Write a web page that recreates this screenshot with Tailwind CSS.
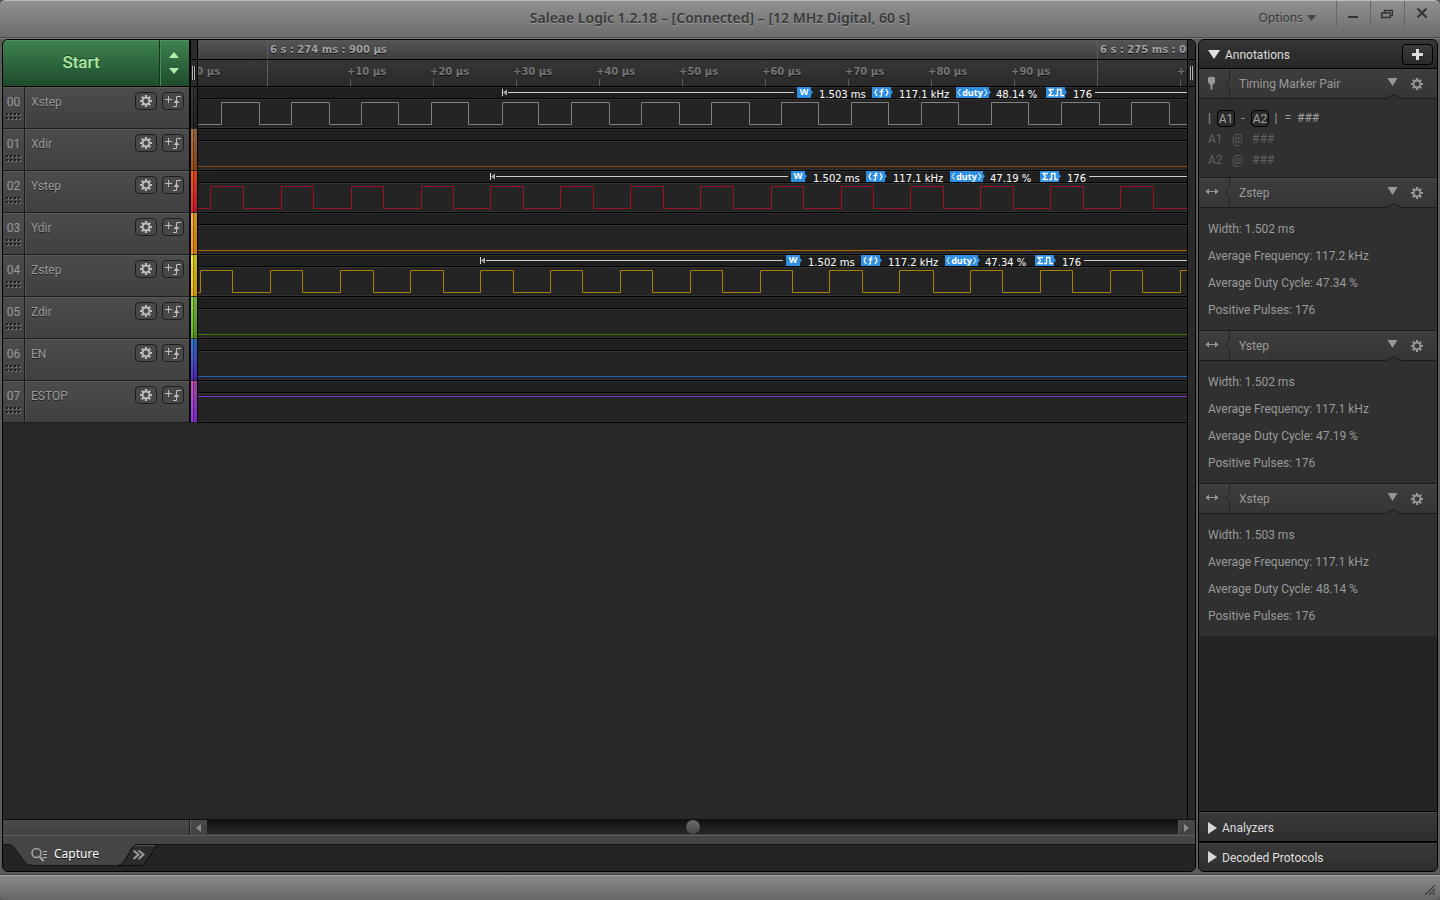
<!DOCTYPE html>
<html lang="en">
<head>
  <meta charset="UTF-8">
  <meta name="viewport" content="width=device-width, initial-scale=1.0">
  <title>Saleae Logic 1.2.18</title>
  <script src="https://cdn.jsdelivr.net/npm/@tailwindcss/browser@4"></script>
</head>
<body class="h-screen flex flex-col overflow-hidden bg-[#5c5c5c] font-['Roboto',sans-serif] text-xs text-[#9a9a9a] select-none">

  <!-- Title bar -->
  <header class="h-[39px] shrink-0 grid grid-cols-[1fr_auto_1fr] bg-linear-to-b from-[#919193] to-[#6a6a6a] border-t border-[#bcbcbc] rounded-t-md shadow-[inset_0_-1px_#7d7d7d,inset_0_-2px_#4c4c4c] font-['Noto_Sans',sans-serif]">
    <span></span>
    <h1 class="pt-[7px] text-sm leading-5 font-semibold text-[#3a3a3a] [text-shadow:0_1px_#999]">Saleae Logic 1.2.18 – [Connected] – [12 MHz Digital, 60 s]</h1>
    <div class="flex justify-end pr-0.5">
      <button class="h-[34px] mr-5 flex items-center gap-1 text-[#353535] [text-shadow:0_1px_#999]">Options
        <svg class="w-[9px] h-[6px]"><path d="M0 0h9L4.5 6z" fill="#444"/></svg>
      </button>
      <button aria-label="Minimize" class="w-[34px] h-[26px] border-l border-[#666] flex justify-center pr-0.5"><svg class="w-[12px] h-[26px]"><path d="M1 15h10v2H1z" fill="#333"/></svg></button>
      <button aria-label="Restore" class="w-[34px] h-[26px] border-l border-[#666] flex justify-center pr-0.5"><svg class="w-[12px] h-[26px]"><path d="M3.500 11.500v-2h8v5h-2M.75 12h8.500v4.500h-8.500z" fill="none" stroke="#333" stroke-width="1.5"/></svg></button>
      <button aria-label="Close" class="w-[34px] h-[26px] border-l border-[#666] flex justify-center"><svg class="w-[12px] h-[26px]"><path d="M1.500 7.500l9 9M10.500 7.500l-9 9" stroke="#333" stroke-width="2"/></svg></button>
    </div>
  </header>

  <main class="flex-1 min-h-0 flex gap-0.5 px-0.5">

    <!-- Capture view -->
    <section class="flex-1 min-w-0 flex flex-col border border-black rounded-md overflow-hidden bg-[#282828]">
      <div class="flex-1 min-h-0 flex">
        <div class="flex-1 min-w-0 flex flex-col">
          <!-- Start button and time ruler -->
          <div class="h-[47px] shrink-0 flex border-b border-black">
            <div class="w-[186px] flex bg-linear-to-b from-[#3f8350] to-[#1e4c2c] shadow-[inset_0_1px_#559364] text-[#aee6a4]">
              <button class="flex-1 text-[17px] leading-5 font-medium pb-0.5 [text-shadow:0_-1px_#1c4528]">Start</button>
              <div class="w-[30px] border-l border-[#133a1e] shadow-[inset_1px_0_#4b8c5b] flex flex-col items-center justify-center gap-[10px] pr-0.5">
                <button aria-label="Increase duration"><svg class="block w-[10px] h-[6px]"><path d="M0 6h10L5 0z" fill="#b6ecae"/></svg></button>
                <button aria-label="Decrease duration"><svg class="block w-[10px] h-[6px]"><path d="M0 0h10L5 6z" fill="#b6ecae"/></svg></button>
              </div>
            </div>
            <div class="w-[9px] border-l-2 border-r border-black bg-[#2b2b2b]">
              <div class="h-[20px] border-b border-black"></div>
              <svg class="block w-[6px] h-[26px]"><path d="M1.500 6v14M3.500 6v14" stroke="#b5b5b5"/><path d="M2.500 6v14M4.500 6v14" stroke="#111"/></svg>
            </div>
            <div class="flex-1 min-w-0 flex flex-col overflow-hidden font-['DejaVu_Sans',sans-serif] font-bold text-[10px] whitespace-nowrap [text-shadow:0_1px_#111]">
              <div class="h-[20px] flex pl-[69px] border-b border-black bg-linear-to-b from-[#565656] to-[#3e3e3e] text-[#a0a0a0] leading-5 overflow-hidden">
                <div class="w-[830px] shrink-0 border-l border-[#5e5e5e] pl-0.5">6 s : 274 ms : 900 µs</div>
                <div class="w-[830px] shrink-0 border-l border-[#5e5e5e] pl-0.5">6 s : 275 ms : 000 µs</div>
              </div>
              <div id="ruler" class="h-[26px] flex bg-linear-to-b from-[#373737] to-[#2a2a2a] text-[#757575] -ml-[17px]"></div>
            </div>
          </div>
          <!-- Channels -->
          <div id="channels"></div>
        </div>
        <!-- Right grip -->
        <div class="w-[8px] border-l border-black bg-[#2a2a2a]">
          <div class="h-[20px] border-b border-black"></div>
          <div class="h-[27px] border-b border-black"><svg class="block w-[7px] h-[26px]"><path d="M2.500 6v14M4.500 6v14" stroke="#b5b5b5"/><path d="M3.500 6v14" stroke="#111"/></svg></div>
        </div>
      </div>

      <!-- Horizontal scrollbar -->
      <div class="h-[16px] shrink-0 flex items-start bg-linear-to-b from-[#4a4a4a] to-[#414141] border-t border-[#111]">
        <div class="w-[187px] h-full border-r border-[#1c1c1c]"></div>
        <button aria-label="Scroll left" class="w-[17px] h-[15px] flex items-center justify-center pr-0.5 border-l border-[#606060]"><svg class="w-[5px] h-[8px]"><path d="M5 0v8L0 4z" fill="#8c8c8c"/></svg></button>
        <input type="range" aria-label="Time position" min="0" max="100" value="50" class="flex-1 min-w-0 h-[14px] appearance-none bg-linear-to-b from-[#121212] to-[#272727] [&::-webkit-slider-thumb]:appearance-none [&::-webkit-slider-thumb]:size-[14px] [&::-webkit-slider-thumb]:rounded-full [&::-webkit-slider-thumb]:bg-linear-to-b [&::-webkit-slider-thumb]:from-[#6c6c6c] [&::-webkit-slider-thumb]:to-[#454545]">
        <button aria-label="Scroll right" class="w-[17px] h-[15px] flex items-center justify-center pr-0.5 border-l border-[#555]"><svg class="w-[5px] h-[8px]"><path d="M0 0v8l5-4z" fill="#8c8c8c"/></svg></button>
      </div>

      <!-- Capture tabs -->
      <div class="h-[36px] shrink-0 bg-[#242424] shadow-[inset_0_1px_#606060,inset_0_9px_#464646,inset_0_10px_#161616]">
        <div class="relative flex h-full">
          <svg class="absolute left-0 top-0 w-[160px] h-[36px]">
            <path d="M0 1H160V9H134Q131 10 129 13L122 25Q119 30 115 30H29Q24 30 21 26L12 13Q9 9 4 9H0z" fill="#454545"/>
            <path d="M0 9.500H4Q9 9.500 12 13.500L21 26Q24 30.500 29 30.500H115" fill="none" stroke="#161616"/>
            <path d="M115 30.500Q119 30 122 25L129 13Q132 9.500 135 9.500H154L143 27Q141 30.500 137 30.500z" fill="#2c2c2c" stroke="#0c0c0c"/>
            <path d="M131.500 12Q133 10.500 135 10.500H152" fill="none" stroke="#555"/>
            <path d="M130.500 15.500l5 4-5 4.500M135.500 15.500l5 4-5 4.500" fill="none" stroke="#999" stroke-width="2"/>
          </svg>
          <a href="#capture" class="relative flex items-center gap-1.5 pl-7 h-[38px] text-white font-['Noto_Sans',sans-serif] text-xs [text-shadow:0_1px_#111]">
            <svg class="w-[17px] h-[15px]"><circle cx="5.500" cy="6" r="4.500" fill="none" stroke="#a5a5a5" stroke-width="1.500"/><path d="M9 10l3.500 4" stroke="#a5a5a5" stroke-width="2"/><path d="M12 4.500h4M12 7.500h4M12 10.500h4" stroke="#b5b5b5"/></svg>
            Capture
          </a>
        </div>
      </div>
    </section>

    <!-- Side panel -->
    <aside class="w-[240px] shrink-0 flex flex-col border border-black rounded-md overflow-hidden bg-[#242424]">
      <div class="h-[29px] shrink-0 flex items-center pl-[9px] pr-1 bg-linear-to-b from-[#353535] to-[#262626] border-b border-black text-[#dedede]">
        <svg class="w-[12px] h-[9px] mr-[5px]"><path d="M0 0h12L6 9z" fill="#e0e0e0"/></svg>
        <h2 class="flex-1 pt-0.5">Annotations</h2>
        <button aria-label="Add annotation" class="w-[31px] h-[21px] rounded-sm border border-black bg-linear-to-b from-[#3a3a3a] to-[#2a2a2a] flex items-center justify-center"><svg class="w-[11px] h-[11px]"><path d="M4 0h3v4h4v3H7v4H4V7H0V4h4z" fill="#ddd"/></svg></button>
      </div>
      <div id="annotations" class="bg-[#303030]"></div>
      <div class="flex-1"></div>
      <button class="h-[30px] shrink-0 flex items-center pl-[9px] gap-[5px] pt-0.5 border-t border-black bg-linear-to-b from-[#3a3a3a] to-[#2e2e2e] shadow-[inset_0_1px_#4a4a4a] text-[#dedede]">
        <svg class="w-[9px] h-[12px]"><path d="M0 0v12l9-6z" fill="#d8d8d8"/></svg>Analyzers
      </button>
      <button class="h-[30px] shrink-0 flex items-center pl-[9px] gap-[5px] border-t-2 border-black bg-linear-to-b from-[#3a3a3a] to-[#2e2e2e] shadow-[inset_0_1px_#4a4a4a] text-[#dedede]">
        <svg class="w-[9px] h-[12px]"><path d="M0 0v12l9-6z" fill="#d8d8d8"/></svg><span class="pt-px">Decoded Protocols</span>
      </button>
    </aside>
  </main>

  <!-- Status bar -->
  <footer class="h-[28px] shrink-0 pt-0.5">
    <div class="h-full flex justify-end items-end pr-1 pb-1 border-t border-[#414141] bg-linear-to-b from-[#8b8b8b] to-[#676767] shadow-[inset_0_1px_#a0a0a0] rounded-b-md">
      <svg class="w-[12px] h-[12px]"><path d="M1 11L11 1M5 11l6-6M9 11l2-2" stroke="#3c3c3c" stroke-width="1.200"/></svg>
    </div>
  </footer>

  <script>
    // Channel list; edges are x positions where the level toggles
    const channels = [
      { name: 'Xstep', strip: 'from-[#3a3a3a] to-[#292929]', stroke: '#808080', low: true,
        edges: [23, 61, 93, 131, 163, 200, 233, 270, 304, 340, 373, 411, 443, 481, 513, 551, 583, 620, 653, 690, 723, 760, 793, 830, 863, 901, 933, 971],
        measure: { start: 304, badge: 599, width: '1.503 ms', freq: '117.1 kHz', duty: '48.14 %', pulses: '176' } },
      { name: 'Xdir', strip: 'from-[#b07850] to-[#a8540f]', stroke: '#904c18', low: true, edges: [] },
      { name: 'Ystep', strip: 'from-[#ff5c1c] to-[#e6123c]', stroke: '#9c1226', low: true,
        edges: [12, 45, 83, 115, 153, 185, 223, 255, 292, 325, 362, 395, 432, 465, 502, 535, 573, 605, 643, 675, 712, 745, 782, 815, 852, 885, 922, 955],
        measure: { start: 292, badge: 593, width: '1.502 ms', freq: '117.1 kHz', duty: '47.19 %', pulses: '176' } },
      { name: 'Ydir', strip: 'from-[#ffb840] to-[#ff9600]', stroke: '#a86400', low: true, edges: [] },
      { name: 'Zstep', strip: 'from-[#f4f034] to-[#ffb600]', stroke: '#a88000', low: true,
        edges: [2, 34, 72, 104, 142, 175, 212, 245, 282, 315, 352, 384, 422, 454, 492, 524, 562, 594, 631, 664, 701, 735, 772, 804, 842, 874, 912, 944, 982],
        measure: { start: 282, badge: 588, width: '1.502 ms', freq: '117.2 kHz', duty: '47.34 %', pulses: '176' } },
      { name: 'Zdir', strip: 'from-[#94da50] to-[#62ae1c]', stroke: '#3f7a00', low: true, edges: [] },
      { name: 'EN', strip: 'from-[#2f80e0] to-[#5a28cc]', stroke: '#2c60b8', low: true, edges: [] },
      { name: 'ESTOP', strip: 'from-[#cc54c4] to-[#9530f0]', stroke: '#8630c8', low: false, edges: [] },
    ];

    const annotations = [
      { name: 'Zstep', rows: ['Width: 1.502 ms', 'Average Frequency: 117.2 kHz', 'Average Duty Cycle: 47.34 %', 'Positive Pulses: 176'] },
      { name: 'Ystep', rows: ['Width: 1.502 ms', 'Average Frequency: 117.1 kHz', 'Average Duty Cycle: 47.19 %', 'Positive Pulses: 176'] },
      { name: 'Xstep', rows: ['Width: 1.503 ms', 'Average Frequency: 117.1 kHz', 'Average Duty Cycle: 48.14 %', 'Positive Pulses: 176'] },
    ];

    // Gear with eight square teeth around a ring
    function gear(size, color, hole) {
      const teeth = [0, 45, 90, 135].map((a) => `<path d="M-1.200-6.500h2.400v13h-2.400z" transform="rotate(${a})"/>`).join('');
      return `<svg class="${size}" viewBox="-6.500 -6.500 13 13" fill="${color}">${teeth}<circle r="4.500"/><circle r="2.700" fill="${hole}"/></svg>`;
    }

    function signalPath(channel) {
      let level = channel.low ? 37.5 : 15.5;
      let d = `M0 ${level}`;
      channel.edges.forEach((x) => {
        level = level === 37.5 ? 15.5 : 37.5;
        d += `H${x + 0.5}V${level}`;
      });
      return d + 'H4000';
    }

    function badge(cls, content) {
      return `<span class="${cls} shrink-0 h-[11px] bg-[#2f8fe0] text-white font-bold text-[9px] leading-[10px] text-center [clip-path:polygon(0_0,calc(100%-2px)_0,calc(100%-2px)_3px,100%_5px,calc(100%-2px)_8px,calc(100%-2px)_100%,0_100%)]">${content}</span>`;
    }

    function measureBar(m) {
      return `
        <div class="relative flex h-[11px] font-['DejaVu_Sans',sans-serif] text-[10px] leading-4 text-white whitespace-nowrap">
          <div class="shrink-0" style="width:${m.start}px"></div>
          <div class="shrink-0 flex" style="width:${m.badge - m.start - 3}px">
            <svg class="w-[6px] h-[11px] shrink-0"><path d="M.5 2v7" stroke="#ddd"/><path d="M1 5.500l4-3v6z" fill="#aaa"/></svg>
            <div class="flex-1 h-px mt-[5px] bg-[#d0d0d0]"></div>
          </div>
          <div class="w-[3px] shrink-0"></div>
          ${badge("w-[16px] mr-[6px] pr-[2px] font-['Open_Sans',sans-serif]", 'W')}
          <span class="w-[53px] shrink-0">${m.width}</span>
          ${badge('w-[21px] mr-[6px]', '<svg class="w-[19px] h-[11px]" fill="none" stroke="#fff" stroke-width="1.300"><path d="M5 2L3 5.500l2 3.500M14 2l2 3.500L14 9M11.500 2.500Q9.500 1.500 9.500 4V8Q9.500 9.500 7.500 9M7.500 4.500h4"/></svg>')}
          <span class="w-[57px] shrink-0">${m.freq}</span>
          ${badge("w-[35px] mr-[5px] font-['Open_Sans',sans-serif]", '<span class="flex items-center justify-center gap-px pr-[2px]"><svg class="w-[4px] h-[11px]" fill="none" stroke="#fff"><path d="M3.500 2L1 5.500 3.500 9"/></svg>duty<svg class="w-[4px] h-[11px]" fill="none" stroke="#fff"><path d="M.5 2L3 5.500.5 9"/></svg></span>')}
          <span class="w-[50px] shrink-0">${m.duty}</span>
          ${badge('w-[21px] mr-[6px]', '<svg class="w-[19px] h-[11px]" fill="none" stroke="#fff" stroke-width="1.300"><path d="M8 2.500H3L5.500 5.500 3 8.500h5M9 8.500h2.500v-6h3.500v6h3"/></svg>')}
          <span class="w-[22px] shrink-0">${m.pulses}</span>
          <div class="flex-1 h-px mt-[5px] bg-[#d0d0d0]"></div>
        </div>`;
    }

    function channelRow(channel, index) {
      const dots = [0, 4, 8, 12].map((x) => [0, 4].map((y) =>
        `<path d="M${x} ${y}h2v2h-2z" fill="#1c1c1c"/><path d="M${x + 2} ${y + 1}h1v2h-2v-1h1z" fill="#777"/>`).join('')).join('');
      return `
        <div class="flex h-[42px]">
          <div class="w-[22px] flex flex-col items-center border-r border-b border-[#1c1c1c] bg-linear-to-b from-[#4c4c4c] to-[#404040] shadow-[inset_0_1px_#5a5a5a]">
            <span class="h-[26px] pt-[5px] leading-5">0${index}</span>
            <svg class="w-[15px] h-[7px]">${dots}</svg>
          </div>
          <div class="w-[164px] flex gap-[5px] pl-1.5 pr-[5px] pt-[5px] border-b border-[#1c1c1c] bg-linear-to-b from-[#4c4c4c] to-[#404040] shadow-[inset_0_1px_#5a5a5a,inset_1px_0_#525252]">
            <span class="flex-1 leading-5 [text-shadow:0_1px_#222]">${channel.name}</span>
            <button aria-label="${channel.name} settings" class="w-[22px] h-[18px] rounded-sm border border-[#1e1e1e] bg-[#484848] flex items-center justify-center">${gear('size-[12px]', '#bdbdbd', '#484848')}</button>
            <button aria-label="${channel.name} trigger" class="w-[22px] h-[18px] rounded-sm border border-[#1e1e1e] bg-[#484848] flex items-center justify-center">
              <svg class="w-[16px] h-[14px]" fill="none" stroke="#bdbdbd"><path d="M0 5.500h7M3.500 2v7M8 12.500h3.500v-10H16" /><path d="M8.500 9L11.500 5.500 14.500 9z" fill="#bdbdbd" stroke="none"/></svg>
            </button>
          </div>
          <div class="w-[9px] border-l-2 border-r border-black">
            <div class="h-[42px] bg-linear-to-b ${channel.strip} shadow-[inset_0_-1px_#333]"><div class="h-full ml-[2px] border-l border-black/30 bg-black/20"></div></div>
          </div>
          <div class="relative flex-1 min-w-0 overflow-hidden bg-[#242424] border-b border-black">
            <div class="h-[12px] bg-[#1f1f1f] border-b border-black shadow-[inset_0_1px_#2d2d2d]">${channel.measure ? measureBar(channel.measure) : ''}</div>
            <div class="h-[29px] border-y border-[#333]"></div>
            <svg class="absolute inset-0 w-full h-full"><path d="${signalPath(channel)}" fill="none" stroke="${channel.stroke}"/></svg>
          </div>
        </div>`;
    }

    function annotationHeader(name, icon) {
      return `
        <div class="relative h-[30px] flex items-center border-b border-[#1b1b1b] bg-linear-to-b from-[#3d3d3d] to-[#363636] shadow-[inset_0_1px_#444]">
          <svg class="w-[31px] h-[29px] shrink-0">${icon}<path d="M30.500 0v9.500l-4 5 4 5V29" fill="none" stroke="#242424"/></svg>
          <h3 class="flex-1 pl-[9px]">${name}</h3>
          <button aria-label="Collapse ${name}" class="w-[11px] mr-[13px] pb-1"><svg class="block w-[11px] h-[8px]"><path d="M.5 0h10l-5 8z" fill="#979797"/></svg></button>
          <button aria-label="${name} options" class="mr-[14px]">${gear('block size-[12px]', '#979797', '#393939')}</button>
          <svg class="absolute right-[35px] -bottom-px w-[17px] h-[6px]"><path d="M1 5l7.500-4L16 5v1H1z" fill="#303030"/><path d="M0 5.500h1.500l7-4 7 4H17" fill="none" stroke="#1b1b1b"/></svg>
        </div>`;
    }

    document.getElementById('ruler').innerHTML = [9, 0, 1, 2, 3, 4, 5, 6, 7, 8, 9, 0, 1].map((n) => n === 0
      ? '<div class="w-[83px] shrink-0 pl-[3px]"><div class="w-px h-[26px] bg-[#5e5e5e]"></div></div>'
      : `<div class="w-[83px] shrink-0 flex flex-col justify-between"><span class="leading-6 h-[18px]">+${n}0 µs</span><div class="w-px h-[7px] ml-[3px] bg-[#5e5e5e]"></div></div>`).join('');

    document.getElementById('channels').innerHTML = channels.map(channelRow).join('');

    const pin = '<path d="M9 8.500Q12.500 7 16 8.500V13.500L13.500 16v4l-1 1-1-1v-4L9 13.500z" fill="#979797"/>';
    const arrows = '<path d="M8 13.500h10" stroke="#979797"/><path d="M6.500 13.500L10 10.500v6zM19.500 13.500L16 10.500v6z" fill="#979797"/>';
    const key = 'w-[18px] h-[17px] rounded-sm border border-black bg-[#2c2c2c] leading-[17px] text-center';
    document.getElementById('annotations').innerHTML = annotationHeader('Timing Marker Pair', pin) + `
      <div class="h-[79px] pt-[9px] pl-[9px] leading-[21px] border-b border-[#1b1b1b] text-[#606060]">
        <div class="flex items-center text-[#a0a0a0]">
          <span class="w-[9px]">|</span><span class="${key}">A1</span><span class="w-[16px] text-center">-</span><span class="${key}">A2</span><span class="w-[14px] text-center">|</span><span class="w-[10px] text-center">=</span><span class="pl-1">###</span>
        </div>
        <div class="flex"><span class="w-[24px]">A1</span><span class="w-[20px]">@</span><span>###</span></div>
        <div class="flex"><span class="w-[24px]">A2</span><span class="w-[20px]">@</span><span>###</span></div>
      </div>` + annotations.map((a) => annotationHeader(a.name, arrows) + `
      <ul class="h-[123px] last:h-[122px] pt-2 pl-[9px] leading-[27px] border-b border-[#1b1b1b] last:border-b-0">
        ${a.rows.map((r) => `<li>${r}</li>`).join('')}
      </ul>`).join('');
  </script>
</body>
</html>
